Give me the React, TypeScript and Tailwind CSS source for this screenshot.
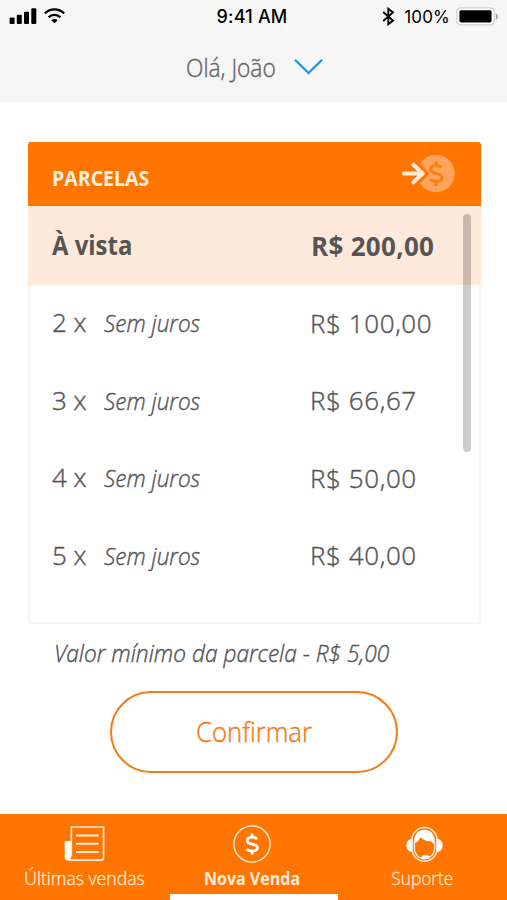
import { ReactNode } from 'react'

interface Installment {
  label: string
  price: string
}

const installments: Installment[] = [
  { label: '2 x', price: 'R$ 100,00' },
  { label: '3 x', price: 'R$ 66,67' },
  { label: '4 x', price: 'R$ 50,00' },
  { label: '5 x', price: 'R$ 40,00' },
]

function StatusBar() {
  return (
    <div className="flex h-8 items-center justify-between pl-[9px] pr-2 font-['Inter',sans-serif] text-[17px] leading-8 text-black">
      <div className="flex w-[180px] items-center gap-[7px]">
        <svg width="28" height="17" viewBox="0 0 28 17" fill="currentColor">
          <rect x="0.6" y="9.5" width="5" height="6.5" rx="1" />
          <rect x="7.8" y="6.8" width="5" height="9.2" rx="1" />
          <rect x="15" y="3.8" width="5" height="12.2" rx="1" />
          <rect x="22.3" y="0.2" width="5" height="15.8" rx="1" />
        </svg>
        <svg width="21" height="16" viewBox="0 0 21 16" fill="none" stroke="currentColor" strokeWidth="2.2">
          <path d="M0.9 5.4a13.6 13.6 0 0 1 19.2 0" />
          <path d="M4.6 9.2a8.4 8.4 0 0 1 11.8 0" />
          <path d="M10.5 15.3 7.3 12.2a4.6 4.6 0 0 1 6.4 0Z" fill="currentColor" stroke="none" />
        </svg>
      </div>
      <span className="mr-1 pt-0.5 text-[18px] font-medium tracking-[0.2px]">9:41 AM</span>
      <div className="flex w-[180px] items-center justify-end">
        <svg width="13" height="19" viewBox="0 0 13 19" fill="none" stroke="currentColor" strokeWidth="1.9" className="mr-[9px]">
          <path d="M1.2 5 11 13.6 6.3 17.2V1.8L11 5.4 1.2 14" />
        </svg>
        <span className="mr-1.5 pt-0.5 tracking-[0.2px]">100%</span>
        <svg width="43" height="19" viewBox="0 0 43 19">
          <rect x="0.8" y="0.8" width="37.4" height="17" rx="4" fill="#fff" stroke="#cfcfcf" strokeWidth="1.2" />
          <rect x="3.4" y="3.2" width="32.2" height="12.2" rx="1.6" fill="#000" />
          <path d="M39.8 6.3c2.8.8 2.8 5.6 0 6.4Z" fill="#a3a3a3" />
        </svg>
      </div>
    </div>
  )
}

function Dollar() {
  return (
    <>
      <path d="M16.2 7.6C15.2 6.4 13.8 5.9 12 5.9c-2.5 0-4.2 1.1-4.2 3.1 0 4.3 8.6 1.9 8.6 6.2 0 2-1.8 3.1-4.3 3.1-2.1 0-3.7-.6-4.7-1.9" />
      <path d="M12 2.6v3.3M12 18.3v3.3" />
    </>
  )
}

function CoinIcon() {
  return (
    <svg width="54" height="40" viewBox="0 0 54 40" fill="none">
      <circle cx="34" cy="19.5" r="18.7" fill="#ffa45c" />
      <path d="M17 8.5 27.4 19.5 17 30.5Z" fill="#ff7500" />
      <g transform="translate(18.6 3.8) scale(1.3)" stroke="#fb7e14" strokeWidth="2.3">
        <Dollar />
      </g>
      <path d="M2 19.5H20M11.4 10.7l9.4 8.8-9.4 8.8" stroke="#ffeadb" strokeWidth="4" strokeLinecap="round" strokeLinejoin="round" />
    </svg>
  )
}

function NewsIcon() {
  return (
    <svg width="41" height="36" viewBox="0 0 41 36" fill="none" stroke="#ffeadb" strokeWidth="1.7">
      <path d="M7.3 30.5V1H39.6V31.2a3 3 0 0 1-3 3H4.5" />
      <path d="M.7 15h6.2v16.2a3.1 3.1 0 0 1-6.2 0Z" fill="#fff" stroke="none" />
      <path d="M12 9.5h22.8M12 17.8h22.8M12 26h22.8" strokeWidth="2" />
    </svg>
  )
}

function SaleIcon() {
  return (
    <svg width="38" height="38" viewBox="0 0 38 38" fill="none" stroke="#fff">
      <circle cx="19" cy="19" r="18.1" stroke="#ffeadb" strokeWidth="1.5" />
      <g transform="translate(5 5.7) scale(1.18 1.11)" strokeWidth="2.4">
        <Dollar />
      </g>
    </svg>
  )
}

function SupportIcon() {
  return (
    <svg width="39" height="37" viewBox="0 0 39 37" fill="none">
      <path d="M7 13.5a6 6 0 0 0 0 11.8ZM32 13.5a6 6 0 0 1 0 11.8Z" fill="#fff" stroke="#fff" strokeWidth="1.5" />
      <path d="M6.9 14.2a12.6 12.6 0 0 1 25.2 0v8.3a12.6 12.6 0 0 1-25.2 0Z" stroke="#ffeadb" strokeWidth="1.5" />
      <path d="M9.2 15.5C9.2 8 13.5 3.8 19.5 3.8S29.8 8 29.8 15.5v2.2c-1.5.2-2.2-.7-2.8-2-3.7-.2-8.2-1-11.8-4.4-.7 2.8-2.4 4.8-6 5.9Z" fill="#fff" />
      <path d="M9.4 16v6.5c0 6 4.4 10.3 9.8 10.3s10.4-4.3 10.4-10.3V16" stroke="#ffeadb" strokeWidth="1.3" />
      <rect x="16.5" y="29.3" width="8" height="3.8" rx="1.9" fill="#fff" />
    </svg>
  )
}

interface TabProps {
  icon: ReactNode
  children: ReactNode
  active?: boolean
}

function Tab({ icon, children, active }: TabProps) {
  return (
    <button className={`flex flex-col items-center border-b-[6px] pt-[11px] ${active ? 'w-[168px] border-white pr-[3px]' : 'w-[169.5px] border-transparent'}`}>
      <span className="flex h-[38px] items-center">{icon}</span>
      <span className="mt-[3px] whitespace-nowrap text-[18px] leading-6">{children}</span>
    </button>
  )
}

export default function App() {
  return (
    <div className="flex h-[900px] w-[507px] flex-col overflow-hidden bg-white font-['Open_Sans',sans-serif] text-[#555]">
      <header className="h-[102px] shrink-0 bg-[#f6f6f6]">
        <StatusBar />
        <div className="flex items-center pl-[186px] pt-[18px]">
          <span className="w-[108px] origin-left scale-x-[0.91] whitespace-nowrap text-[25px] font-light leading-[34px] text-[#666] [-webkit-text-stroke:0.4px]">Olá, João</span>
          <svg width="30" height="18" viewBox="0 0 30 18" fill="none" stroke="#1a93e6" strokeWidth="2.2">
            <path d="M1 1.8 14.5 15 28 1.8" />
          </svg>
        </div>
      </header>

      <main className="flex flex-1 flex-col px-7 pt-10">
        <section className="relative h-[482px] w-[453px] overflow-hidden rounded-[3px]">
          <div className="flex h-16 items-center justify-between bg-[#ff7500] pl-6 pr-[25px]">
            <h2 className="origin-left scale-x-[0.93] pt-2 text-[21px] font-bold leading-7 text-[#ffefe2]">PARCELAS</h2>
            <CoinIcon />
          </div>

          <div className="flex h-[78.5px] items-center bg-[#ffe9da] pl-6 text-[26px] font-bold leading-9">
            <span className="w-[259px]">
              <span className="inline-block origin-left scale-x-[0.92]">À vista</span>
            </span>
            <span className="pt-0.5 tracking-[0.3px]">R$ 200,00</span>
          </div>

          <div className="h-[339.5px] rounded-b-[3px] border-2 border-t-0 border-[#f6f6f6]">
            {installments.map(({ label, price }) => (
              <div key={label} className="flex h-[77.5px] items-center pb-0.5 pl-[22px] text-[26px] font-light leading-9 [-webkit-text-stroke:0.4px]">
                <span className="w-[52px] whitespace-nowrap">{label}</span>
                <span className="w-[206px]">
                  <span className="inline-block origin-left scale-x-[0.92] pt-0.5 text-[24.5px] italic">Sem juros</span>
                </span>
                <span className="whitespace-nowrap pt-px tracking-[0.6px]">{price}</span>
              </div>
            ))}
          </div>

          <div className="absolute right-[10px] top-[72px] h-[238px] w-2 rounded-full bg-black/20" />
        </section>

        <p className="mt-[11px] w-max origin-left scale-x-[0.927] pl-[28px] text-[24.5px] font-light italic leading-9 [-webkit-text-stroke:0.4px]">Valor mínimo da parcela - R$ 5,00</p>

        <button className="ml-[82px] mt-5 h-[82px] w-[288px] rounded-full border-[2.5px] border-[#f47b16] text-[27px] font-light text-[#f47b16] [-webkit-text-stroke:0.4px]">
          <span className="inline-block scale-x-[0.95] pt-px">Confirmar</span>
        </button>
      </main>

      <nav className="flex h-[86px] shrink-0 bg-[#ff7500] text-[#ffeadb]">
        <Tab icon={<NewsIcon />}>
          <span className="inline-block scale-x-[0.98] font-light [-webkit-text-stroke:0.3px]">Últimas vendas</span>
        </Tab>
        <Tab icon={<SaleIcon />} active>
          <span className="inline-block scale-x-[0.89] font-bold">Nova Venda</span>
        </Tab>
        <Tab icon={<span className="pl-1"><SupportIcon /></span>}>
          <span className="inline-block scale-x-[0.96] font-light [-webkit-text-stroke:0.3px]">Suporte</span>
        </Tab>
      </nav>
    </div>
  )
}
